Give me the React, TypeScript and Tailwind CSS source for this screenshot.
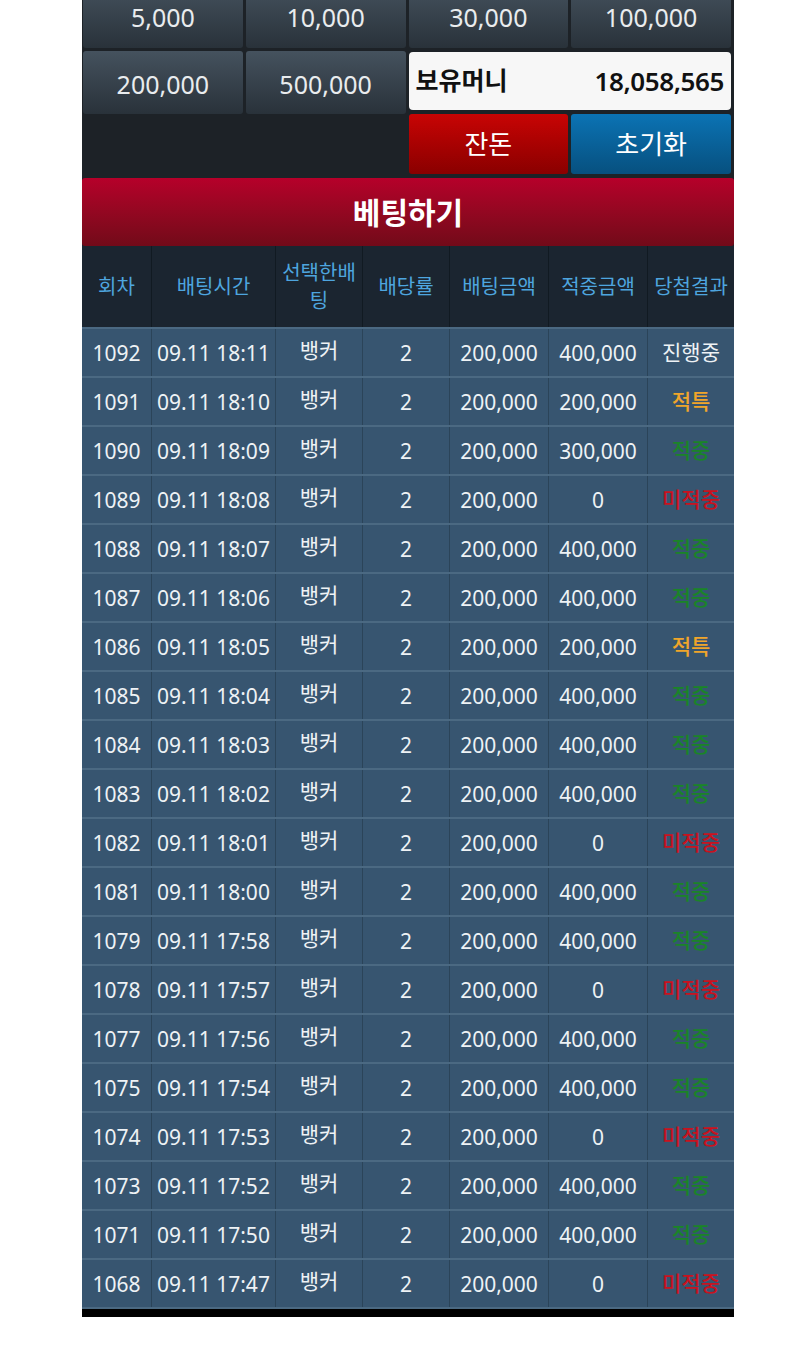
import React from "react";

const rows: [string, string, string, string][] = [
  ["1092", "18:11", "400,000", "진행중"],
  ["1091", "18:10", "200,000", "적특"],
  ["1090", "18:09", "300,000", "적중"],
  ["1089", "18:08", "0", "미적중"],
  ["1088", "18:07", "400,000", "적중"],
  ["1087", "18:06", "400,000", "적중"],
  ["1086", "18:05", "200,000", "적특"],
  ["1085", "18:04", "400,000", "적중"],
  ["1084", "18:03", "400,000", "적중"],
  ["1083", "18:02", "400,000", "적중"],
  ["1082", "18:01", "0", "미적중"],
  ["1081", "18:00", "400,000", "적중"],
  ["1079", "17:58", "400,000", "적중"],
  ["1078", "17:57", "0", "미적중"],
  ["1077", "17:56", "400,000", "적중"],
  ["1075", "17:54", "400,000", "적중"],
  ["1074", "17:53", "0", "미적중"],
  ["1073", "17:52", "400,000", "적중"],
  ["1071", "17:50", "400,000", "적중"],
  ["1068", "17:47", "0", "미적중"],
];

const resultColor = (r: string) =>
  r === "진행중"
    ? "font-normal text-[#eef2f5]"
    : r === "적특"
    ? "font-medium text-[#f0a52a]"
    : r === "적중"
    ? "font-medium text-[#1a8428]"
    : "font-medium text-[#c8121e]";

const cols = "grid grid-cols-[69px_124px_87px_87px_99px_99px_87px]";

const btn =
  "flex flex-1 items-center justify-center rounded-[3px] bg-gradient-to-b from-[#45525e] to-[#29323a] pt-[4px] text-[25px] text-[#e9ecee]";

const cell = "flex items-center justify-center border-l border-[#2b4459]";

export default function App() {
  const headers = ["회차", "배팅시간", "선택한배팅", "배당률", "배팅금액", "적중금액", "당첨결과"];
  return (
    <div
      className="min-h-[1358px] bg-white"
      style={{ fontFamily: '"Noto Sans", "Noto Sans CJK KR", sans-serif' }}
    >
      <div className="ml-[82px] mt-[-16px] w-[652px] bg-[#1d2227]">
        {/* buttons */}
        <div className="grid grid-cols-4 grid-rows-[64px_66px_60px] gap-x-[3px] pl-[1px] pr-[3px]">
          <div className="flex"><div className={btn}>5,000</div></div>
          <div className="flex"><div className={btn}>10,000</div></div>
          <div className="flex"><div className={btn}>30,000</div></div>
          <div className="flex"><div className={btn}>100,000</div></div>
          <div className="flex pt-[3px]"><div className={btn}>200,000</div></div>
          <div className="flex pt-[3px]"><div className={btn}>500,000</div></div>
          <div className="col-span-2 flex pb-[4px] pt-[4px]">
            <div className="flex flex-1 items-center justify-between rounded-[4px] bg-[#f7f7f7] pl-[7px] pr-[7px]">
              <span className="text-[25px] font-bold text-[#111]">보유머니</span>
              <span className="text-[26px] font-semibold tracking-[-0.4px] text-[#111]">18,058,565</span>
            </div>
          </div>
          <div />
          <div />
          <div className="flex items-center justify-center rounded-[3px] bg-gradient-to-b from-[#c80404] to-[#8a0000] text-[26px] text-white">
            잔돈
          </div>
          <div className="flex items-center justify-center rounded-[3px] bg-gradient-to-b from-[#0b73b4] to-[#07507f] text-[26px] text-white">
            초기화
          </div>
        </div>

        {/* title */}
        <div className="mt-[4px] flex h-[68px] items-center justify-center rounded-[3px] bg-gradient-to-b from-[#b6002a] to-[#720a19] text-[30px] font-bold text-white">
          베팅하기
        </div>

        {/* table header */}
        <div className={`${cols} h-[81px] bg-[#1b2530]`}>
          {headers.map((h, i) => (
            <div
              key={h}
              className={`flex items-center justify-center px-[2px] text-center text-[20px] leading-[28px] text-[#4ea5df] ${
                i > 0 ? "border-l border-[#111a22]" : ""
              }`}
            >
              {h}
            </div>
          ))}
        </div>

        {/* rows */}
        <div className="border-b-2 border-[#4b6982] bg-[#375570]">
          {rows.map(([no, time, win, res]) => (
            <div key={no} className={`${cols} h-[49px] border-t-2 border-[#4b6982] text-[21px] text-[#eef2f5]`}>
              <div className="flex items-center justify-center pt-[3px]">{no}</div>
              <div className={`${cell} pt-[3px]`}>09.11 {time}</div>
              <div className={`${cell} pb-[3px]`}>뱅커</div>
              <div className={`${cell} pt-[3px]`}>2</div>
              <div className={`${cell} pt-[3px]`}>200,000</div>
              <div className={`${cell} pt-[3px]`}>{win}</div>
              <div className={`${cell} ${resultColor(res)}`}>{res}</div>
            </div>
          ))}
        </div>
        <div className="h-[8px] bg-black" />
      </div>
    </div>
  );
}
